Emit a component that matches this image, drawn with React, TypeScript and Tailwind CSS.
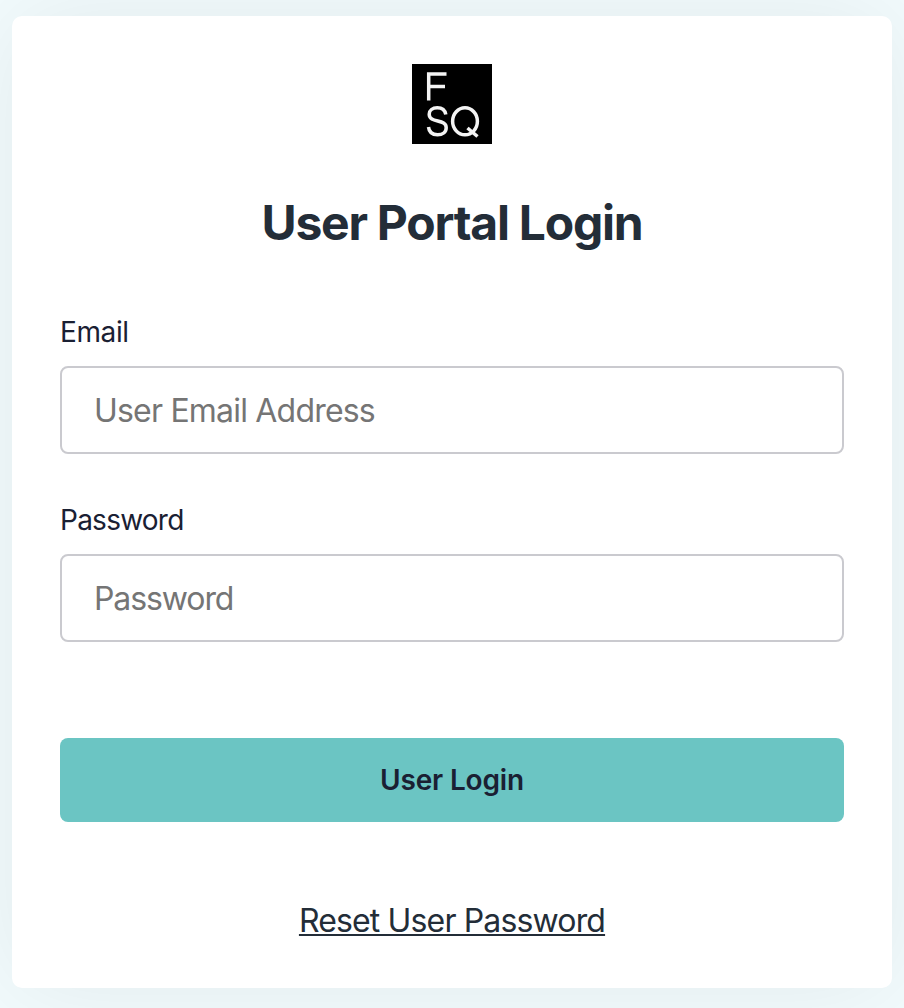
export default function App() {
  return (
    <main className="h-[1008px] w-[904px] overflow-hidden bg-[#f2fbfd] px-3 pt-4 font-['Inter',sans-serif] text-[#1a202c]">
      <div className="flex h-[972px] flex-col rounded-[10px] bg-white px-12 pt-12 shadow-[0_0_100px_rgba(0,0,0,0.07)]">
        <svg className="h-20 w-20 self-center bg-black" viewBox="0 0 80 80" aria-label="FSQ">
          <g fill="none" stroke="#f4f4f4" strokeWidth="3.5">
            <path d="M16.700 36.500V10H34.500M16.700 22.500H33" />
            <path d="M33.800 50.500C33 46 29.500 43.800 25.300 43.800C20.500 43.800 17.200 46.300 17.200 50.200C17.200 59.500 34.200 54.500 34.200 63.700C34.200 68 30.500 70.700 25.500 70.700C20.500 70.700 17 68 16.500 63" />
            <ellipse cx="53" cy="57.300" rx="12.400" ry="13.500" />
            <path d="M55.500 64L65.500 72.500" />
          </g>
        </svg>
        <h1 className="mt-[49px] h-[60px] text-center text-[48px] font-bold leading-[60px] tracking-[-1.24px] text-[#232d38]">User Portal Login</h1>
        <form className="flex flex-col" onSubmit={(e) => e.preventDefault()}>
          <label htmlFor="email" className="mt-[59px] h-10 text-[28px] leading-10 tracking-[-0.4px] text-[#1a2033]">Email</label>
          <input id="email" type="email" placeholder="User Email Address" className="mt-[14px] h-[88px] rounded-lg border-2 border-[#cacacf] px-8 text-[32px] tracking-[-0.8px] placeholder:text-[#757575]" />
          <label htmlFor="password" className="mt-[46px] h-10 text-[28px] leading-10 tracking-[-0.75px] text-[#1a2033]">Password</label>
          <input id="password" type="password" placeholder="Password" className="mt-[14px] h-[88px] rounded-lg border-2 border-[#cacacf] px-8 text-[32px] tracking-[-1.1px] placeholder:text-[#757575]" />
          <button className="mt-24 h-[84px] rounded-lg bg-[#6bc5c3] text-[28px] font-semibold tracking-[-0.15px] text-[#1a2033]">User Login</button>
        </form>
        <a href="#" className="mt-[75px] self-center text-[32px] leading-[48px] tracking-[-0.85px] text-[#232d38] underline decoration-2 underline-offset-2 [text-decoration-skip-ink:none]">Reset User Password</a>
      </div>
    </main>
  );
}
